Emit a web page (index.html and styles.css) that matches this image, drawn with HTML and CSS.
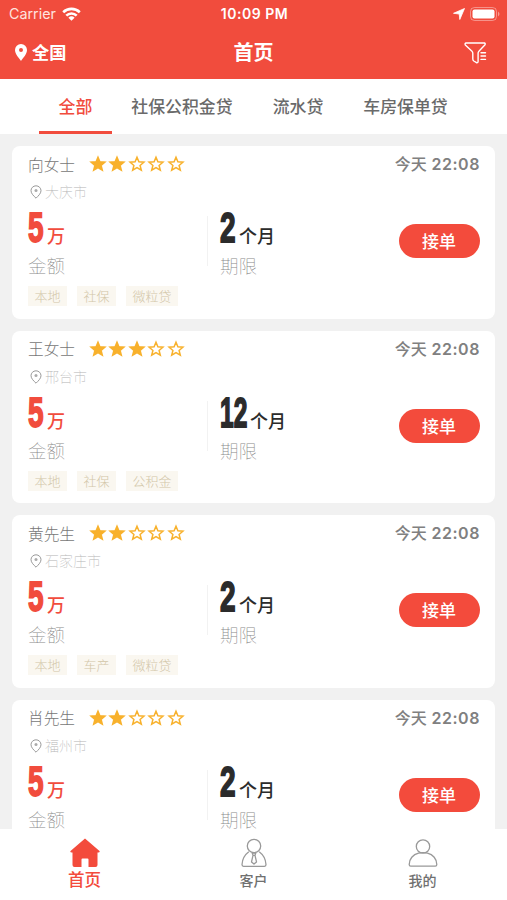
FILE: index.html
```html
<!DOCTYPE html>
<html lang="zh-CN">
<head>
<meta charset="utf-8">
<title>首页</title>
<link rel="stylesheet" href="styles.css">
</head>
<body>
<svg class="defs" width="0" height="0" aria-hidden="true">
  <symbol id="star" viewBox="0 0 18 18"><path d="M9 2.200l1.900 4.600 5 .4-3.800 3.200 1.200 4.800L9 12.600l-4.300 2.600 1.200-4.800-3.800-3.200 5-.4z"/></symbol>
  <symbol id="pin" viewBox="0 0 12 14"><path d="M6 .8C3.200.8 1 3 1 5.700 1 8.500 3.800 11 6 13.200 8.200 11 11 8.500 11 5.700 11 3 8.800.8 6 .8z" fill="none" stroke="#999"/><circle cx="6" cy="5.500" r="1.500" fill="#aaa"/></symbol>
</svg>
<div class="app">
  <header class="header">
    <div class="status">
      <div class="carrier">Carrier
        <svg width="19" height="14" viewBox="0 0 19 14"><g fill="none" stroke="#fff" stroke-width="2.600"><path d="M1.200 5.200a12 12 0 0 1 16.600 0"/><path d="M4.300 8.700a7.400 7.400 0 0 1 10.400 0"/></g><path d="M6.400 10.700a4.500 4.500 0 0 1 6.200 0L9.500 13.800z" fill="#fff"/></svg>
      </div>
      <div class="clock">10:09 PM</div>
      <div class="power">
        <svg width="12" height="12" viewBox="0 0 12 12"><path d="M11.500.5L6.800 11.500 6.200 6 .5 5.300z" fill="#fff" stroke="#fff" stroke-width=".8" stroke-linejoin="round"/></svg>
        <svg width="30" height="14" viewBox="0 0 30 14"><rect x=".5" y=".5" width="26" height="13" rx="4" fill="none" stroke="#fff" stroke-opacity=".4"/><rect x="2.500" y="2.500" width="22" height="9" rx="2" fill="#fff"/><path d="M28 4.500q3 2.500 0 5z" fill="#fff" fill-opacity=".45"/></svg>
      </div>
    </div>
    <div class="bar">
      <div class="region"><svg width="12" height="17" viewBox="0 0 12 17"><path fill="#fff" fill-rule="evenodd" d="M6 0a6 6 0 0 0-6 6c0 4 4 8 6 11 2-3 6-7 6-11a6 6 0 0 0-6-6zm0 4a2 2 0 1 1 0 4 2 2 0 0 1 0-4z"/></svg>全国</div>
      <h1 class="title">首页</h1>
      <svg class="filter" width="23" height="22" viewBox="0 0 23 22" fill="none" stroke="#fff" stroke-width="1.400" stroke-linejoin="round" stroke-linecap="round"><path d="M2 1h18.500q1.300.6.3 2L14.900 9.200q-.8.8-.8 2V19.300q0 1.700-1.600 1.400l-2.700-1.700q-1-.7-1-2V11.200q0-1.200-.8-2L1.300 3Q.5 1.600 2 1z"/><path d="M17 10.700h4.500M17 14h4.500M17 17.400h4.500"/></svg>
    </div>
  </header>
  <nav class="tabs"><span class="tab active">全部</span><span class="tab">社保公积金贷</span><span class="tab">流水贷</span><span class="tab">车房保单贷</span></nav>
  <main class="list" id="list"></main>
  <footer class="nav">
    <div class="item active"><svg width="30" height="30" viewBox="0 0 30 30"><path fill="#f34b3c" d="M15 .5L29.500 13q.7 1.500-1.200 1.500H27.500V27q0 2-2 2h-7v-7.500q0-1-1-1h-5q-1 0-1 1V29h-7q-2 0-2-2V14.500h-.8Q-.2 14.500.5 13z"/></svg><span>首页</span></div>
    <div class="item"><svg width="30" height="30" viewBox="0 0 30 30" fill="none" stroke="#999" stroke-width="1.300" stroke-linejoin="round"><circle cx="15" cy="8" r="6.700"/><path d="M9.800 13.800C5.500 17 3.300 22 3 26.500q0 1.800 1.500 1.800h21q1.500 0 1.500-1.800c-.3-4.500-2.500-9.500-6.800-12.700M13.200 15h3.600l-.8 2.400h-2zM14 17.400l-1.500 6.500L15 26l2.500-2.100-1.500-6.500"/></svg><span>客户</span></div>
    <div class="item"><svg width="30" height="30" viewBox="0 0 30 30" fill="none" stroke="#999" stroke-width="1.300" stroke-linejoin="round"><circle cx="15" cy="8.500" r="6.700"/><path d="M10.500 15.200C5 16.500 1.200 21 1.200 26.500q0 1.700 1.500 1.700h24.600q1.500 0 1.500-1.700C28.800 21 25 16.500 19.500 15.200q-4.500-1-9 0z"/></svg><span>我的</span></div>
  </footer>
</div>
<script src="app.js"></script>
</body>
</html>
```
FILE: styles.css
```css
* { box-sizing: border-box; }
body { margin: 0; background: #f1f1f1; font-family: Inter, "Noto Sans CJK SC", sans-serif; }
svg { display: block; flex: none; }
.defs { position: absolute; }
.app { height: 900px; display: flex; flex-direction: column; overflow: hidden; }
.header { flex: none; height: 79px; background: #f14c3d; color: #fff; }
.status { height: 27px; display: grid; grid-template-columns: 1fr auto 1fr; align-items: center; padding: 0 7px 0 9px; font-size: 14px; }
.carrier { display: flex; align-items: center; gap: 6px; color: #ffe3df; font-size: 14.300px; }
.clock { font-weight: 600; font-size: 14px; letter-spacing: .5px; }
.power { display: flex; justify-content: flex-end; align-items: center; gap: 5px; }
.bar { height: 51px; display: grid; grid-template-columns: 1fr auto 1fr; align-items: center; padding: 0 20px; }
.region { display: flex; align-items: center; gap: 5px; margin-left: -5px; font-size: 17.200px; font-weight: 700; line-height: 24px; }
.title { margin: 1px 0 0; font-size: 20px; line-height: 30px; font-weight: 700; }
.filter { justify-self: end; }
.tabs { flex: none; height: 55px; background: #fff; display: flex; padding-left: 39px; }
.tab { height: 55px; padding: 1px 20px 0; font-size: 16.900px; line-height: 54px; font-weight: 500; color: #6a6a6a; white-space: nowrap; }
.tab.active { padding: 1px 19.500px 0; color: #f14c3d; border-bottom: 3px solid #f14c3d; }
.tab:nth-child(2) { padding-left: 19.500px; }
.list { flex: 1; min-height: 0; overflow: hidden; padding: 12px 12px 0; display: flex; flex-direction: column; gap: 12px; }
.card { flex: none; height: 172.500px; background: #fff; border-radius: 8px; padding: 6px 15px 0 16px; }
.top { display: flex; align-items: center; height: 24px; }
.name { width: 60.500px; font-size: 15.700px; font-weight: 300; color: #777; }
.stars { display: flex; gap: 1.500px; }
.star { fill: none; stroke: #f8b12c; stroke-width: 1.500; }
.star.on { fill: #f8b12c; }
.time { margin-left: auto; font-size: 16px; font-weight: 600; letter-spacing: .55px; color: #808080; position: relative; top: -1px; }
.time span { font-weight: 500; letter-spacing: 0; }
.place { display: flex; align-items: center; gap: 3px; height: 32px; padding-left: 2px; font-size: 14px; line-height: 18px; font-weight: 100; color: #b5b5b5; }
.main { display: grid; grid-template-columns: 179px 192px 81px; height: 78px; }
.metric + .metric { padding-left: 13px; background: linear-gradient(#f2f2f2, #f2f2f2) 0 8px / 1px 50px no-repeat; }
.value { display: flex; align-items: baseline; height: 45px; line-height: 48px; color: #2b2b2b; }
.money .value { color: #f14c3d; }
.digits { width: 19px; font-family: "Liberation Sans", sans-serif; font-size: 43px; font-weight: 700; line-height: 40px; -webkit-text-stroke: 1.800px; transform: translateY(-1px) scaleX(.65); transform-origin: left; }
.digits.wide { width: 30px; transform: translateY(-1px) scaleX(.57); }
.unit { font-size: 18px; font-weight: 500; }
.label { height: 26px; line-height: 27px; font-size: 18.500px; font-weight: 100; color: #888; }
.order { align-self: start; margin-top: 16px; height: 34px; border: 0; border-radius: 17px; padding: 0 1px 0 0; background: #f34b3c; color: #fff; font: 500 17px/34px "Noto Sans CJK SC", sans-serif; }
.tags { display: flex; gap: 10px; }
.tag { height: 20px; line-height: 20px; padding: 0 6.500px; background: #faf7f0; color: #d2c6a8; font-size: 13px; font-weight: 300; }
.nav { flex: none; height: 71px; background: #fff; display: grid; grid-template-columns: repeat(3, 1fr); }
.item { display: flex; flex-direction: column; align-items: center; padding-top: 9px; font-size: 14px; line-height: 26px; font-weight: 500; color: #707070; }
.item.active { color: #f34b3c; font-size: 16.500px; line-height: 25px; }
```
FILE: app.js
```js
const orders = [
  { name: "向女士", stars: 2, place: "大庆市", months: "2", tags: ["本地", "社保", "微粒贷"] },
  { name: "王女士", stars: 3, place: "邢台市", months: "12", tags: ["本地", "社保", "公积金"] },
  { name: "黄先生", stars: 2, place: "石家庄市", months: "2", tags: ["本地", "车产", "微粒贷"] },
  { name: "肖先生", stars: 2, place: "福州市", months: "2", tags: [] }
];
const star = on => `<svg class="star${on ? " on" : ""}" width="18" height="18"><use href="#star"/></svg>`;
document.getElementById("list").innerHTML = orders.map(o => `
  <article class="card">
    <div class="top"><span class="name">${o.name}</span><span class="stars">${[0, 1, 2, 3, 4].map(i => star(i < o.stars)).join("")}</span><span class="time"><span>今天</span> 22:08</span></div>
    <div class="place"><svg width="12" height="14"><use href="#pin"/></svg>${o.place}</div>
    <div class="main">
      <div class="metric money"><div class="value"><span class="digits">5</span><span class="unit">万</span></div><div class="label">金额</div></div>
      <div class="metric"><div class="value"><span class="digits${o.months.length > 1 ? " wide" : ""}">${o.months}</span><span class="unit">个月</span></div><div class="label">期限</div></div>
      <button class="order">接单</button>
    </div>
    <div class="tags">${o.tags.map(t => `<span class="tag">${t}</span>`).join("")}</div>
  </article>`).join("");
```
